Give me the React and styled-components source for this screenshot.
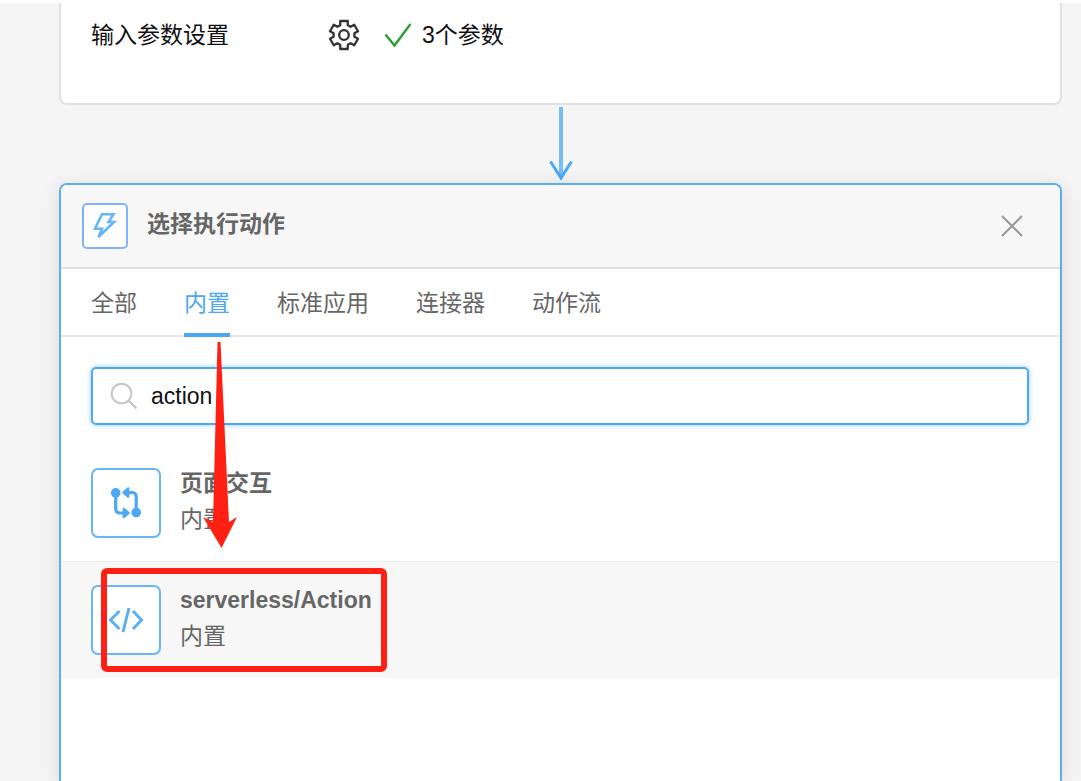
import React, { useState } from "react";
import styled, { createGlobalStyle } from "styled-components";

const GlobalStyle = createGlobalStyle`
  * {
    box-sizing: border-box;
  }
  body {
    margin: 0;
    background: #f5f5f5;
    color: #111;
    font-family: "Liberation Sans", "Noto Sans CJK SC", sans-serif;
    font-size: 23px;
    line-height: 36px;
  }
  button, input {
    font: inherit;
    color: inherit;
    border: none;
    background: none;
    padding: 0;
  }
`;

const Page = styled.main`
  display: flex;
  flex-direction: column;
  height: 100vh;
  overflow: hidden;
  border-top: 3px solid #fff;
  padding: 0 19px 0 59px;
`;

const StepCard = styled.section`
  flex: none;
  background: #fff;
  border: 2px solid #e0e0e0;
  border-top: none;
  border-radius: 0 0 8px 8px;
  padding: 0 30px 36px;
`;

const ParamRow = styled.div`
  display: flex;
  align-items: center;
  height: 64px;
`;

const ParamLabel = styled.span`
  width: 237px;
`;

const GearButton = styled.button`
  display: flex;
  margin-right: 24px;
  cursor: pointer;
`;

const ParamState = styled.span`
  display: flex;
  align-items: center;
  gap: 10px;
`;

const Connector = styled.div`
  flex: none;
  display: flex;
  justify-content: center;
  height: 78px;
  padding-top: 2px;
`;

const Panel = styled.section`
  flex: 1 0 auto;
  position: relative;
  background: #fff;
  border: 2px solid #5aaff3;
  border-bottom: none;
  border-radius: 8px 8px 0 0;
  box-shadow: 0 4px 20px rgba(0, 0, 0, 0.12);
`;

const PanelHeader = styled.header`
  display: flex;
  align-items: center;
  height: 84px;
  padding: 0 37px 0 21px;
  background: #f7f7f7;
  border-bottom: 2px solid #e0e0e0;
  border-radius: 6px 6px 0 0;
`;

const IconBox = styled.span`
  flex: none;
  display: flex;
  align-items: center;
  justify-content: center;
  width: ${(props) => (props.$small ? 46 : 70)}px;
  height: ${(props) => (props.$small ? 46 : 70)}px;
  background: #fff;
  border: 2px solid ${(props) => (props.$small ? "#82b2ff" : "#68b6f8")};
  border-radius: ${(props) => (props.$small ? 5 : 7)}px;
`;

const PanelTitle = styled.h2`
  flex: 1;
  margin: 0 0 4px 19px;
  font-size: 23px;
  font-weight: 700;
  color: #666;
`;

const CloseButton = styled.button`
  display: flex;
  cursor: pointer;
`;

const TabBar = styled.div`
  display: flex;
  gap: 47px;
  height: 68px;
  padding: 0 30px;
  box-shadow: inset 0 -2px #e8e8e8;
`;

const Tab = styled.button`
  color: ${(props) => (props.$active ? "#4aa8f5" : "#666")};
  box-shadow: ${(props) => (props.$active ? "inset 0 -4px #4aa8f5" : "none")};
  cursor: pointer;
`;

const SearchBox = styled.label`
  display: flex;
  align-items: center;
  gap: 13px;
  height: 58px;
  margin: 30px 31px 19px 30px;
  padding: 0 17px;
  border: 2px solid #4aa8f5;
  border-radius: 5px;
  box-shadow: 0 0 5px rgba(74, 168, 245, 0.6);
`;

const SearchInput = styled.input`
  flex: 1;
  min-width: 0;
  outline: none;
`;

const ActionList = styled.ul`
  list-style: none;
  margin: 0;
  padding: 0;
`;

const ActionItem = styled.li`
  position: relative;
  background: ${(props) => (props.$hovered ? "#f7f7f7" : "#fff")};
  box-shadow: ${(props) => (props.$hovered ? "inset 0 1px #eee" : "none")};
`;

const ActionButton = styled.button`
  display: flex;
  gap: 19px;
  width: 100%;
  padding: 24px 30px 23px;
  text-align: left;
  cursor: pointer;
`;

const ActionText = styled.span`
  display: flex;
  flex-direction: column;
  height: 66px;
  justify-content: center;
  color: #666;
`;

const ActionName = styled.span`
  font-weight: 700;
`;

const Highlight = styled.span`
  position: absolute;
  top: 7px;
  left: 40px;
  width: 286px;
  height: 104px;
  border: 6px solid #ff2013;
  border-radius: 6px;
  pointer-events: none;
`;

const Pointer = styled.svg`
  position: absolute;
  top: 157px;
  left: 141px;
  z-index: 1;
  pointer-events: none;
`;

// outline of a cog with six teeth
const gearPoints = [0, 60, 120, 180, 240, 300]
  .flatMap((tooth) => [
    [tooth - 21, 10.5],
    [tooth - 15, 14.5],
    [tooth + 15, 14.5],
    [tooth + 21, 10.5],
  ])
  .map(([deg, r]) => {
    const a = (deg * Math.PI) / 180;
    return `${(16 + r * Math.sin(a)).toFixed(2)},${(16 - r * Math.cos(a)).toFixed(2)}`;
  })
  .join(" ");

const GearIcon = () => (
  <svg width="32" height="32" fill="none" stroke="#333" strokeWidth="2.3" strokeLinejoin="round">
    <polygon points={gearPoints} />
    <circle cx="16" cy="16" r="4.8" />
  </svg>
);

const CheckIcon = () => (
  <svg width="28" height="26" fill="none" stroke="#2f9e33" strokeWidth="2.4">
    <path d="M1.5 12.5 L10.5 23.5 L26.5 2" />
  </svg>
);

const DownArrow = () => (
  <svg width="24" height="74" fill="none">
    <path d="M12 0 V70" stroke="#74bdf7" strokeWidth="4" />
    <path d="M1.5 54.5 L12 71 L22.5 54.5" stroke="#4aa8f5" strokeWidth="3" />
  </svg>
);

const BoltIcon = () => (
  <svg width="26" height="30" fill="none" stroke="#66b6f8" strokeWidth="2.6">
    <path d="M10 3.2 H21.5 L16.5 11 H22 L6.5 26 L10 17.8 H3 Z" />
  </svg>
);

const CloseIcon = () => (
  <svg width="22" height="22" fill="none" stroke="#999" strokeWidth="2">
    <path d="M1 1 L21 21 M21 1 L1 21" />
  </svg>
);

const SearchIcon = () => (
  <svg width="28" height="28" fill="none" stroke="#c6c6c6" strokeWidth="2">
    <circle cx="11.5" cy="11.5" r="9.8" />
    <path d="M18.5 18.5 L26.5 26.5" strokeWidth="2.4" />
  </svg>
);

const InteractIcon = () => (
  <svg width="32" height="32" fill="none" stroke="#4aa8f5" strokeWidth="3.2">
    <circle cx="5.7" cy="5.8" r="4.8" fill="#4aa8f5" stroke="none" />
    <path d="M5.7 6 V21.5 Q5.7 26 10 26 H14" />
    <path d="M13.8 22 L18.5 26 L13.8 30 Z" fill="#4aa8f5" strokeWidth="2.4" strokeLinejoin="round" />
    <circle cx="26.2" cy="25.5" r="4.8" fill="#4aa8f5" stroke="none" />
    <path d="M26.2 26 V10 Q26.2 5.5 22 5.5 H18" />
    <path d="M18.2 1.5 L13.5 5.5 L18.2 9.5 Z" fill="#4aa8f5" strokeWidth="2.4" strokeLinejoin="round" />
  </svg>
);

const CodeIcon = () => (
  <svg width="36" height="26" fill="none" stroke="#5aaff5" strokeWidth="3">
    <path d="M11.5 4 L2.5 13 L11.5 22" />
    <path d="M25 4 L33.5 13 L25 22" />
    <path d="M21 1 L15 25" />
  </svg>
);

const tabs = ["全部", "内置", "标准应用", "连接器", "动作流"];

const actions = [
  { id: "page", name: "页面交互", type: "内置", icon: <InteractIcon /> },
  { id: "serverless", name: "serverless/Action", type: "内置", icon: <CodeIcon />, marked: true },
];

function App() {
  const [activeTab, setActiveTab] = useState("内置");
  const [keyword, setKeyword] = useState("action");

  return (
    <>
      <GlobalStyle />
      <Page>
        <StepCard>
          <ParamRow>
            <ParamLabel>输入参数设置</ParamLabel>
            <GearButton>
              <GearIcon />
            </GearButton>
            <ParamState>
              <CheckIcon />
              3个参数
            </ParamState>
          </ParamRow>
        </StepCard>

        <Connector>
          <DownArrow />
        </Connector>

        <Panel>
          <PanelHeader>
            <IconBox $small>
              <BoltIcon />
            </IconBox>
            <PanelTitle>选择执行动作</PanelTitle>
            <CloseButton>
              <CloseIcon />
            </CloseButton>
          </PanelHeader>

          <TabBar>
            {tabs.map((tab) => (
              <Tab key={tab} $active={tab === activeTab} onClick={() => setActiveTab(tab)}>
                {tab}
              </Tab>
            ))}
          </TabBar>

          <SearchBox>
            <SearchIcon />
            <SearchInput value={keyword} onChange={(e) => setKeyword(e.target.value)} />
          </SearchBox>

          <ActionList>
            {actions.map((action) => (
              <ActionItem key={action.id} $hovered={action.marked}>
                <ActionButton>
                  <IconBox>{action.icon}</IconBox>
                  <ActionText>
                    <ActionName>{action.name}</ActionName>
                    <span>{action.type}</span>
                  </ActionText>
                </ActionButton>
                {action.marked && <Highlight />}
              </ActionItem>
            ))}
          </ActionList>

          <Pointer width="36" height="208">
            <path d="M15.5 0 H18.5 L27 180 L35 175 L19.5 206 L1 175 L11 180 Z" fill="#ff2013" />
          </Pointer>
        </Panel>
      </Page>
    </>
  );
}

export default App;
